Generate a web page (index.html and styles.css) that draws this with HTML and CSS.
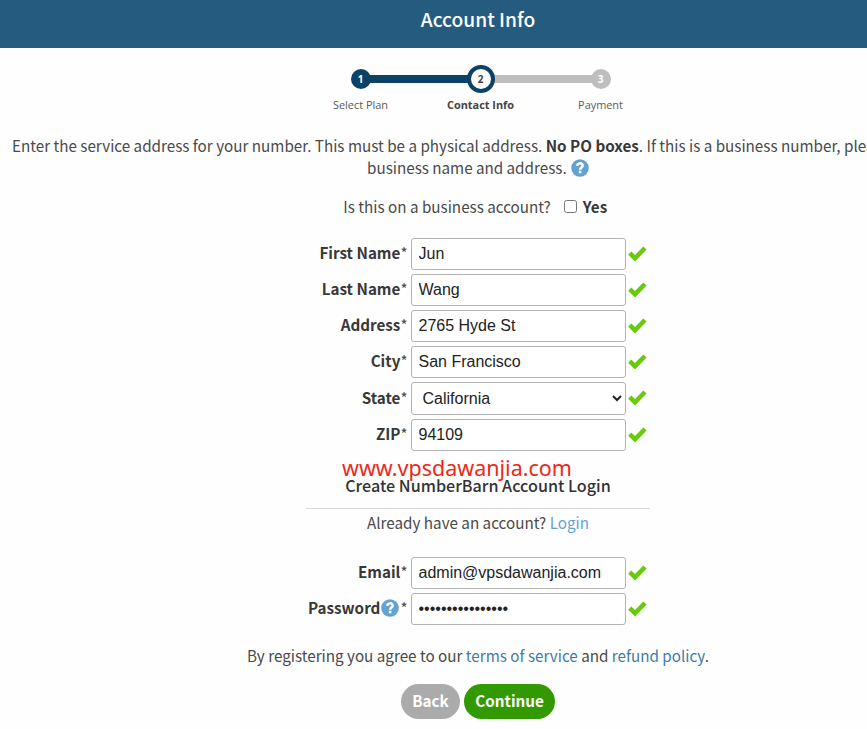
FILE: index.html
```html
<!DOCTYPE html>
<html lang="en">
<head>
<meta charset="utf-8">
<title>Account Info</title>
<link rel="stylesheet" href="styles.css">
</head>
<body>
<svg width="0" height="0" class="defs">
  <symbol id="check" viewBox="0 0 19 16"><path d="M.2 8.7 3.2 5.6 7 9.1 15.3.5 18.6 3.6 7 15.5Z" fill="#66cb0b"/></symbol>
  <symbol id="help" viewBox="0 0 18 18"><circle cx="9" cy="9" r="8.8" fill="#64a3cf"/><path d="M6.2 6.8C6.5 3.6 11.8 3.6 11.7 6.6 11.7 8.5 9.1 8.3 9.1 10.7" fill="none" stroke="#fff" stroke-width="2.5"/><rect x="7.8" y="11.8" width="2.6" height="2.5" fill="#fff"/></symbol>
</svg>
<div class="page">
  <header class="bar"><h1>Account Info</h1></header>
  <div class="steps">
    <div class="step done"><span class="dot">1</span><span class="name">Select Plan</span></div>
    <div class="step current"><span class="dot">2</span><span class="name">Contact Info</span></div>
    <div class="step todo"><span class="dot">3</span><span class="name">Payment</span></div>
  </div>
  <div class="intro">
    <p class="first">Enter the service address for your number. This must be a physical address. <b>No PO boxes</b>. If this is a business number, please</p>
    <p class="second">business name and address. <svg class="help"><use href="#help"/></svg></p>
  </div>
  <label class="business"><span>Is this on a business account?</span><input type="checkbox"><b>Yes</b></label>
  <form class="fields">
    <div class="row"><label><b>First Name</b>*</label><input type="text" value="Jun"><svg class="check"><use href="#check"/></svg></div>
    <div class="row"><label><b>Last Name</b>*</label><input type="text" value="Wang"><svg class="check"><use href="#check"/></svg></div>
    <div class="row"><label><b>Address</b>*</label><input type="text" value="2765 Hyde St"><svg class="check"><use href="#check"/></svg></div>
    <div class="row"><label><b>City</b>*</label><input type="text" value="San Francisco"><svg class="check"><use href="#check"/></svg></div>
    <div class="row tall"><label><b>State</b>*</label><select><option>California</option></select><svg class="check"><use href="#check"/></svg></div>
    <div class="row"><label><b>ZIP</b>*</label><input type="text" value="94109"><svg class="check"><use href="#check"/></svg></div>
  </form>
  <section class="login-head"><h2>Create NumberBarn Account Login</h2><span class="mark">www.vpsdawanjia.com</span></section>
  <p class="already">Already have an account? <a href="#">Login</a></p>
  <form class="fields">
    <div class="row"><label><b>Email</b>*</label><input type="text" value="admin@vpsdawanjia.com"><svg class="check"><use href="#check"/></svg></div>
    <div class="row"><label><b>Password</b><svg class="help"><use href="#help"/></svg>*</label><input type="password" value="abcdefghijklmnop"><svg class="check"><use href="#check"/></svg></div>
  </form>
  <p class="terms">By registering you agree to our <a href="#">terms of service</a> and <a href="#">refund policy</a>.</p>
  <div class="actions"><button class="back" type="button">Back</button><button class="next" type="button">Continue</button></div>
</div>
</body>
</html>
```
FILE: styles.css
```css
* { box-sizing: border-box; }
html { overflow: hidden; background: #fefefe; }
body { margin: 0; font: 15.22px/22px "Noto Sans CJK SC", "Noto Sans", sans-serif; color: #4a4a4a; overflow: hidden; }
h1, h2, p { margin: 0; }
a { text-decoration: none; }
b { font-weight: 700; color: #383838; }
.defs { display: block; height: 0; }
.page { width: 867px; height: 729px; overflow: hidden; }
.page > * { width: 960px; }
.page > .bar { width: 867px; height: 48px; background: #255b7e; color: #fff; }
.bar h1 { width: 956px; text-align: center; font-size: 19.2px; font-weight: 500; line-height: 39px; }
.page > .steps { width: 360px; height: 76px; margin-left: 300.5px; padding-top: 17px; display: grid; grid-template-columns: repeat(3, 1fr); font-family: "Open Sans", sans-serif; }
.step { display: grid; grid-template-rows: 28px 24px; justify-items: center; align-items: center; font-size: 10.9px; color: #5a5a5a; }
.dot { width: 20px; height: 20px; border-radius: 50%; font-size: 10px; line-height: 20px; font-weight: 700; text-align: center; color: #fff; grid-area: 1 / 1; z-index: 1; }
.step::before { content: ""; grid-area: 1 / 1; width: 120px; height: 8px; }
.name { grid-area: 2 / 1; }
.done .dot { background: #0b4265; }
.done::before { background: linear-gradient(90deg, transparent 50%, #0b4265 50%); }
.current::before { background: linear-gradient(90deg, #0b4265 50%, #bebebe 50%); }
.current .dot { width: 28px; height: 28px; border: 4px solid #0b4265; background: #fff; color: #444; }
.current .name { font-weight: 700; color: #444; }
.todo::before { background: linear-gradient(90deg, #bebebe 50%, transparent 50%); }
.todo .dot { background: #bebebe; }
.intro { margin-top: 10px; }
.first { padding-left: 12px; white-space: nowrap; }
.second { height: 22px; text-align: center; padding-right: 4px; word-spacing: -.1px; }
.second .help { margin-left: 1px; }
.help { width: 18px; height: 18px; vertical-align: -3px; }
.business { display: flex; justify-content: center; align-items: center; padding-right: 9.5px; margin-top: 17px; height: 22px; }
.business input { width: 13px; height: 13px; margin: 0 6px 0 13px; }
.fields { margin-top: 21px; padding-left: 291px; display: grid; gap: 4px; }
.row { display: grid; grid-template-columns: 116px 215px 19px; column-gap: 4px; height: 32px; align-items: center; }
.row.tall { height: 33px; }
.row label { height: 26px; margin-right: -.5px; text-align: right; white-space: nowrap; padding-bottom: 4px; }
.row .help { vertical-align: -3px; margin: 0 1px; }
.row input, .row select { width: 215px; height: 100%; border: 1px solid #b3b3b3; border-radius: 3px; background: #fff; color: #222; font: 16px "Liberation Sans", Arial, sans-serif; padding: 0 6.5px; margin: 0; }
.row select { padding: 0 2px 0 6.5px; }
.check { width: 19px; height: 16px; margin: 0 0 1px -2px; }
.page > .login-head { position: relative; width: 344px; height: 58px; margin-left: 306px; border-bottom: 1px solid #d8d8d8; }
.login-head h2 { padding-top: 23px; font-size: 16.15px; line-height: 22px; font-weight: 500; color: #333; text-align: center; }
.mark { position: absolute; left: 36px; top: 4px; font: 21.5px/26px "Noto Sans", sans-serif; color: #ed2818; }
.already { margin-top: 2px; text-align: center; padding-right: 4px; }
.already a { color: #64a3cf; }
.already + .fields { margin-top: 24px; }
.terms { margin-top: 19px; text-align: center; padding-right: 4px; }
.terms a { color: #447ba5; }
.actions { display: flex; justify-content: center; gap: 4px; margin-top: 18px; padding-right: 4px; }
.actions button { height: 35px; border: 0; border-radius: 18px; padding: 0 0 3px; color: #fff; font: 700 15.22px/22px "Noto Sans CJK SC", sans-serif; }
.back { width: 59px; background: #ababab; }
.next { width: 91px; background: #339900; }
```
